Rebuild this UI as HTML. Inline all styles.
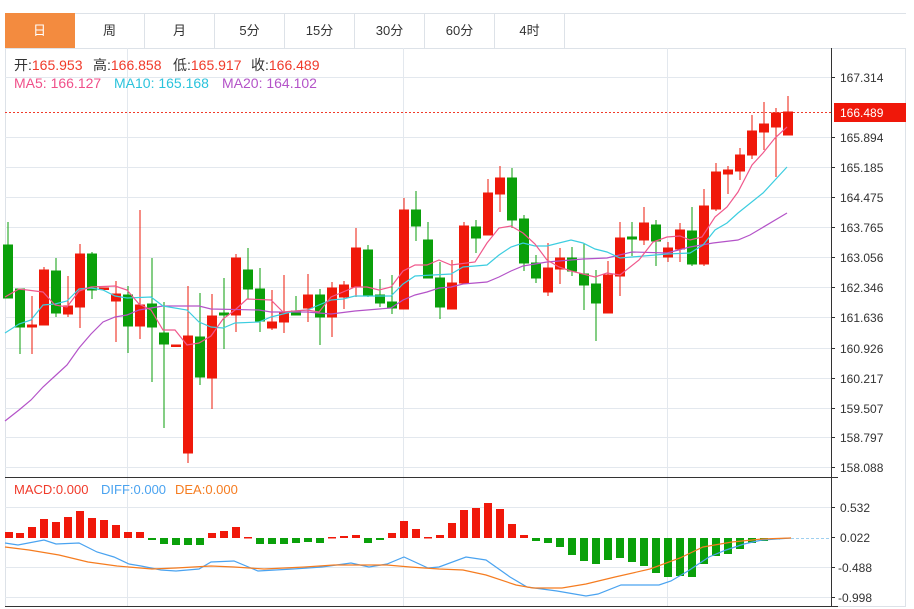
<!DOCTYPE html>
<html><head><meta charset="utf-8"><style>
body{margin:0;background:#fff;width:914px;height:609px;overflow:hidden;font-family:"Liberation Sans","Noto Sans CJK SC",sans-serif;}
.tabs{position:absolute;left:5px;top:13px;height:35px;display:flex;}
.tabs div{width:69px;height:34px;border-right:1px solid #dde2e8;border-top:1px solid #dde2e8;line-height:34px;text-align:center;font-size:13px;color:#333;}
.tabs div.on{background:#f38b3f;color:#fff;border-color:#f38b3f;}
svg{position:absolute;left:0;top:0;}
</style></head><body>
<div class="tabs"><div class="on">日</div><div>周</div><div>月</div><div>5分</div><div>15分</div><div>30分</div><div>60分</div><div>4时</div></div>
<svg width="914" height="609" font-family="Liberation Sans, Noto Sans CJK SC, sans-serif">
<line x1="565" y1="13.5" x2="906" y2="13.5" stroke="#dde2e8"/>
<rect x="5.5" y="48.5" width="900" height="558" fill="none" stroke="#dde2e8"/>
<g stroke="#e3e8ee">
<path d="M5 77.5H831M5 137.5H831M5 167.5H831M5 197.5H831M5 227.5H831M5 257.5H831M5 287.5H831M5 317.5H831M5 348.5H831M5 378.5H831M5 408.5H831M5 437.5H831M5 467.5H831M5 507.5H831M5 567.5H831M5 597.5H831"/>
<path d="M127.5 48V606M403.5 48V606M667.5 48V606"/>
</g>
<line x1="5" y1="477.5" x2="838" y2="477.5" stroke="#333"/>
<line x1="5" y1="606.5" x2="838" y2="606.5" stroke="#333"/>
<line x1="831.5" y1="48" x2="831.5" y2="607" stroke="#333"/>
<g stroke="#333"><path d="M831 77.5h4M831 137.5h4M831 167.5h4M831 197.5h4M831 227.5h4M831 257.5h4M831 287.5h4M831 317.5h4M831 348.5h4M831 378.5h4M831 408.5h4M831 437.5h4M831 467.5h4M831 507.5h4M831 537.5h4M831 567.5h4M831 597.5h4"/></g>
<g font-size="12" fill="#333">
<text x="840" y="82">167.314</text><text x="840" y="142">165.894</text><text x="840" y="172">165.185</text><text x="840" y="202">164.475</text><text x="840" y="232">163.765</text><text x="840" y="262">163.056</text><text x="840" y="292">162.346</text><text x="840" y="322">161.636</text><text x="840" y="353">160.926</text><text x="840" y="383">160.217</text><text x="840" y="413">159.507</text><text x="840" y="442">158.797</text><text x="840" y="472">158.088</text>
<text x="840" y="512">0.532</text><text x="840" y="542">0.022</text><text x="838" y="572">-0.488</text><text x="838" y="602">-0.998</text>
</g>
<g font-size="14">
<text y="70" fill="#333"><tspan x="14">开:</tspan><tspan fill="#f03a2a">165.953</tspan><tspan x="93">高:</tspan><tspan fill="#f03a2a">166.858</tspan><tspan x="173">低:</tspan><tspan fill="#f03a2a">165.917</tspan><tspan x="251">收:</tspan><tspan fill="#f03a2a">166.489</tspan></text>
<text y="88"><tspan x="14" fill="#f0508a">MA5: 166.127</tspan><tspan x="114" fill="#2bc3dc">MA10: 165.168</tspan><tspan x="222" fill="#b453c8">MA20: 164.102</tspan></text>
</g>
<g font-size="13"><text y="494"><tspan x="14" fill="#f03a2a">MACD:0.000</tspan><tspan x="101" fill="#4aa3f0">DIFF:0.000</tspan><tspan x="175" fill="#f57c20">DEA:0.000</tspan></text></g>
<line x1="5" y1="112.5" x2="831" y2="112.5" stroke="#f03a2a" stroke-dasharray="2,2"/>
<rect x="834" y="103" width="72" height="19" fill="#f0180a"/>
<text x="840" y="117" font-size="12" fill="#fff">166.489</text>
<line x1="791" y1="538.5" x2="831" y2="538.5" stroke="#9fd0f0" stroke-dasharray="3,2"/>
<g id="candles" stroke-width="1">
<g stroke="#0a9e0a" fill="#0aa00a">
<path d="M8 222V298M20 289V354M56 258V317M92 252V299M128 286V353M152 258V382M164 302V428M200 293V385M224 278V349M248 248V299M260 268V332M296 296V315M320 289V345M368 245V297M380 279V307M392 275V314M416 191V241M428 222V278M440 262V319M476 220V253M512 168V228M524 215V271M536 255V283M572 247V276M584 243V310M596 270V341M632 222V256M656 220V266M692 207V266"/>
<rect x="3.5" y="245" width="9" height="53"/><rect x="15.5" y="289" width="9" height="38"/><rect x="51.5" y="271" width="9" height="42"/><rect x="87.5" y="254" width="9" height="36"/><rect x="123.5" y="295" width="9" height="31"/><rect x="147.5" y="304" width="9" height="23"/><rect x="159.5" y="333" width="9" height="11"/><rect x="195.5" y="337" width="9" height="40"/><rect x="219.5" y="313" width="9" height="2"/><rect x="243.5" y="270" width="9" height="19"/><rect x="255.5" y="289" width="9" height="32"/><rect x="291.5" y="311" width="9" height="4"/><rect x="315.5" y="295" width="9" height="22"/><rect x="363.5" y="250" width="9" height="46"/><rect x="375.5" y="295" width="9" height="8"/><rect x="387.5" y="302" width="9" height="6"/><rect x="411.5" y="210" width="9" height="16"/><rect x="423.5" y="240" width="9" height="38"/><rect x="435.5" y="278" width="9" height="29"/><rect x="471.5" y="227" width="9" height="11"/><rect x="507.5" y="178" width="9" height="42"/><rect x="519.5" y="219" width="9" height="44"/><rect x="531.5" y="263" width="9" height="15"/><rect x="567.5" y="258" width="9" height="13"/><rect x="579.5" y="274" width="9" height="11"/><rect x="591.5" y="284" width="9" height="19"/><rect x="627.5" y="237" width="9" height="2"/><rect x="651.5" y="225" width="9" height="16"/><rect x="687.5" y="231" width="9" height="33"/>
</g>
<g stroke="#ee1a0a" fill="#f0180a">
<path d="M32 296V354M44 267V325M68 276V317M80 244V328M116 281V342M140 210V339M188 286V463M212 294V409M236 254V332M272 290V330M284 275V333M308 274V322M332 282V337M344 281V309M356 228V297M404 198V309M452 260V309M464 222V283M488 179V235M500 166V212M548 243V296M560 248V284M608 261V313M620 222V296M644 207V245M668 242V262M680 223V262M704 189V266M716 163V211M728 166V194M740 148V180M752 115V159M764 102V150M776 108V177M788 96V135"/>
<rect x="27.5" y="325" width="9" height="2"/><rect x="39.5" y="270" width="9" height="55"/><rect x="63.5" y="306" width="9" height="8"/><rect x="75.5" y="254" width="9" height="53"/><rect x="99.5" y="288" width="9" height="1.5"/><rect x="111.5" y="294" width="9" height="7"/><rect x="135.5" y="305" width="9" height="21"/><rect x="171.5" y="345" width="9" height="1.5"/><rect x="183.5" y="336" width="9" height="117"/><rect x="207.5" y="316" width="9" height="62"/><rect x="231.5" y="258" width="9" height="57"/><rect x="267.5" y="322" width="9" height="6"/><rect x="279.5" y="313" width="9" height="9"/><rect x="303.5" y="295" width="9" height="13"/><rect x="327.5" y="288" width="9" height="29"/><rect x="339.5" y="285" width="9" height="12"/><rect x="351.5" y="248" width="9" height="39"/><rect x="399.5" y="210" width="9" height="99"/><rect x="447.5" y="283" width="9" height="26"/><rect x="459.5" y="226" width="9" height="57"/><rect x="483.5" y="193" width="9" height="42"/><rect x="495.5" y="178" width="9" height="16"/><rect x="543.5" y="268" width="9" height="24"/><rect x="555.5" y="258" width="9" height="11"/><rect x="603.5" y="275" width="9" height="38"/><rect x="615.5" y="238" width="9" height="38"/><rect x="639.5" y="223" width="9" height="17"/><rect x="663.5" y="248" width="9" height="9"/><rect x="675.5" y="230" width="9" height="19"/><rect x="699.5" y="206" width="9" height="58"/><rect x="711.5" y="172" width="9" height="37"/><rect x="723.5" y="170" width="9" height="4"/><rect x="735.5" y="155" width="9" height="16"/><rect x="747.5" y="131" width="9" height="24"/><rect x="759.5" y="124" width="9" height="8"/><rect x="771.5" y="113" width="9" height="14"/><rect x="783.5" y="112" width="9" height="23"/>
</g>
</g>
<g fill="none" stroke-width="1.2">
<polyline stroke="#b453c8" points="5,421 19,410 31,400 43,387 55,376 67,365 79,348 91,334 103,322 115,317 127,315 139,310 151,308 163,306 199,306 211,309 259,310 271,312 307,312 331,314 355,311 391,308 403,300 415,295 427,292 439,288 451,287 463,284 487,282 499,277 511,271 523,266 547,262 583,259 607,258 632,252 667,253 690,247 713,243 738,240 750,235 787,213"/>
<polyline stroke="#3ccde0" points="5,333 19,324 31,320 43,305 55,304 67,301 79,289 91,288 103,290 115,296 127,298 151,297 163,306 187,310 199,322 211,327 223,328 235,323 259,322 271,317 295,311 307,310 319,305 331,300 343,299 355,296 391,296 403,284 415,276 451,274 463,267 487,265 499,255 511,247 523,243 535,246 547,246 571,240 583,243 595,249 607,252 620,258 667,254 690,253 703,245 715,230 727,223 738,213 763,193 787,167"/>
<polyline stroke="#f0588c" points="5,297 19,289 43,292 55,305 67,307 79,291 91,287 115,286 127,290 139,304 151,310 163,330 175,330 187,345 199,343 211,336 223,319 235,310 247,299 271,300 283,312 307,310 319,312 331,297 343,292 355,287 367,287 379,290 391,287 403,271 415,265 427,265 439,260 451,265 475,262 487,243 499,228 511,226 523,233 535,244 547,260 559,267 571,271 595,277 607,273 620,275 639,260 653,242 667,237 680,236 690,240 702,237 715,217 727,207 738,192 752,165 763,153 775,138 787,127"/>
</g>
<g fill="#f0180a">
<rect x="5" y="532" width="8" height="6"/><rect x="16" y="533" width="8" height="5"/><rect x="28" y="527" width="8" height="11"/><rect x="40" y="519" width="8" height="19"/><rect x="52" y="522" width="8" height="16"/><rect x="64" y="517" width="8" height="21"/><rect x="76" y="511" width="8" height="27"/><rect x="88" y="518" width="8" height="20"/><rect x="100" y="520" width="8" height="18"/><rect x="112" y="525" width="8" height="13"/><rect x="124" y="532" width="8" height="6"/><rect x="136" y="532" width="8" height="6"/>
<rect x="208" y="533" width="8" height="5"/><rect x="220" y="531" width="8" height="7"/><rect x="232" y="527" width="8" height="11"/><rect x="244" y="537" width="8" height="1.5"/>
<rect x="328" y="537" width="8" height="1.5"/><rect x="340" y="536" width="8" height="2"/><rect x="352" y="535" width="8" height="3"/>
<rect x="388" y="533" width="8" height="5"/><rect x="400" y="521" width="8" height="17"/><rect x="412" y="529" width="8" height="9"/><rect x="424" y="537" width="8" height="1.5"/><rect x="436" y="535" width="8" height="3"/><rect x="448" y="523" width="8" height="15"/><rect x="460" y="510" width="8" height="28"/><rect x="472" y="508" width="8" height="30"/><rect x="484" y="503" width="8" height="35"/><rect x="496" y="509" width="8" height="29"/><rect x="508" y="524" width="8" height="14"/><rect x="520" y="535" width="8" height="3"/>
</g>
<g fill="#0aa00a">
<rect x="148" y="538" width="8" height="2"/><rect x="160" y="538" width="8" height="6"/><rect x="172" y="538" width="8" height="7"/><rect x="184" y="538" width="8" height="7"/><rect x="196" y="538" width="8" height="7"/>
<rect x="256" y="538" width="8" height="6"/><rect x="268" y="538" width="8" height="6"/><rect x="280" y="538" width="8" height="6"/><rect x="292" y="538" width="8" height="5"/><rect x="304" y="538" width="8" height="4"/><rect x="316" y="538" width="8" height="5"/>
<rect x="364" y="538" width="8" height="5"/><rect x="376" y="538" width="8" height="2"/>
<rect x="532" y="538" width="8" height="3"/><rect x="544" y="538" width="8" height="5"/><rect x="556" y="538" width="8" height="9"/><rect x="568" y="538" width="8" height="17"/><rect x="580" y="538" width="8" height="23"/><rect x="592" y="538" width="8" height="26"/><rect x="604" y="538" width="8" height="22"/><rect x="616" y="538" width="8" height="20"/><rect x="628" y="538" width="8" height="24"/><rect x="640" y="538" width="8" height="28"/><rect x="652" y="538" width="8" height="35"/><rect x="664" y="538" width="8" height="39"/><rect x="676" y="538" width="8" height="38"/><rect x="688" y="538" width="8" height="39"/><rect x="700" y="538" width="8" height="26"/><rect x="712" y="538" width="8" height="18"/><rect x="724" y="538" width="8" height="16"/><rect x="736" y="538" width="8" height="11"/><rect x="748" y="538" width="8" height="5"/><rect x="760" y="538" width="8" height="3"/><rect x="772" y="538" width="8" height="1.5"/>
</g>
<g fill="none" stroke-width="1.2">
<polyline stroke="#4aa3f0" points="5,543 18,545 44,540 56,544 79,543 97,552 114,557 129,564 141,566 161,570 176,571 199,569 211,562 234,561 258,571 293,569 322,567 351,563 369,567 387,564 404,557 428,568 439,567 466,557 486,560 510,577 527,587 557,591 586,596 598,594 621,585 659,585 671,581 688,571 709,557 726,550 744,544 762,540 791,538"/>
<polyline stroke="#f57c20" points="5,547 29,550 59,555 88,562 117,566 152,569 176,568 211,566 234,567 264,569 305,567 334,565 387,565 410,567 439,569 463,570 486,575 516,585 533,588 562,588 586,584 615,577 650,569 680,558 703,547 732,542 762,539 791,538"/>
</g>
</svg>
</body></html>
